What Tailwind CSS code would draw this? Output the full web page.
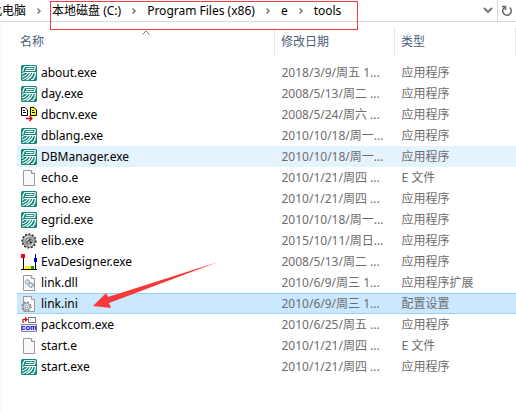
<!DOCTYPE html>
<html lang="zh-CN">
<head>
    <meta charset="UTF-8">
    <meta name="viewport" content="width=device-width, initial-scale=1.0">
    <title>tools</title>
    <script src="https://cdn.jsdelivr.net/npm/@tailwindcss/browser@4"></script>
</head>
<body class="flex flex-col min-h-screen bg-white text-xs text-black overflow-x-hidden font-['Noto_Sans','Noto_Sans_CJK_SC',sans-serif]">

    <!-- Icons -->
    <svg class="hidden">
        <symbol id="eapp" viewBox="0 0 16 16">
            <rect width="16" height="16" rx="1.5" fill="#12897c"/>
            <g fill="none" stroke="#fff" stroke-width="1.2">
                <path d="M1.500 6.500L3 2.500Q3.300 1.500 4.500 1.500H13.500Q14.500 1.500 14.200 2.500L13.500 5.500H4"/>
                <path d="M5 3.500H12.500"/>
                <path d="M1 9.500Q2 7.500 4 7.500H14.500Q14.500 12 12 14.500H10"/>
                <path d="M1 12Q5 11 7 8M1.500 14.500Q7.500 13 9.500 8M5.500 15Q10.500 12.500 12 8"/>
            </g>
        </symbol>
        <symbol id="conv" viewBox="0 0 16 16">
            <path d="M.5 .5H4L6.500 3V8.500H.5Z" fill="#fff" stroke="#000"/>
            <path d="M9.500 .5H13L15.500 3V8.500H9.500Z" fill="#ff0" stroke="#000"/>
            <path d="M2 3.500H4M2 5.500H5M11 3.500H13M11 5.500H14" stroke="#000"/>
            <path d="M5 11.500H10M8.500 9L11 11.500L8.500 14" fill="none" stroke="#e00000" stroke-width="1.300"/>
        </symbol>
        <symbol id="page" viewBox="0 0 16 16">
            <path d="M2.500 .5H10.500L13.500 3.500V15.500H2.500Z" fill="#fafafa" stroke="#999"/>
            <path d="M10.500 .5V3.500H13.500" fill="#fff" stroke="#999"/>
        </symbol>
        <symbol id="dll" viewBox="0 0 16 16">
            <use href="#page"/>
            <circle cx="6.500" cy="7" r="2" fill="#e8f0f5" stroke="#8294a0" stroke-width="1.400" stroke-dasharray="1.300 .6"/>
            <circle cx="10" cy="10" r="2.200" fill="#dcebf5" stroke="#8294a0" stroke-width="1.400" stroke-dasharray="1.300 .6"/>
        </symbol>
        <symbol id="ini" viewBox="0 0 16 16">
            <use href="#page"/>
            <circle cx="5.500" cy="10.500" r="4.300" fill="none" stroke="#76848c" stroke-width="1.600" stroke-dasharray="1.700 1.700"/>
            <circle cx="5.500" cy="10.500" r="3.300" fill="#e3eaee" stroke="#8b989f"/>
            <circle cx="5.500" cy="10.500" r="1.300" fill="#fff" stroke="#8b989f"/>
        </symbol>
        <symbol id="gear" viewBox="0 0 16 16">
            <circle cx="8" cy="8" r="6.600" fill="#999" stroke="#111" stroke-width="2" stroke-dasharray="1.500 1.900"/>
            <circle cx="8" cy="8" r="6.200" fill="#a8a8a8" stroke="#555" stroke-width=".6"/>
            <path d="M3.500 6Q5 3 8.500 3M12.500 10Q11 13 7.500 13" fill="none" stroke="#eee"/>
            <circle cx="8" cy="8" r="3.200" fill="#ccc" stroke="#666" stroke-width=".8"/>
            <path d="M5.500 10L9 6V9.500H11" fill="none" stroke="#111"/>
        </symbol>
        <symbol id="eva" viewBox="0 0 16 16">
            <path d="M2.500 3V15.500M14.500 0V15.500M0 15.500H16" fill="none" stroke="#000"/>
            <path d="M0 0H4V4H0Z" fill="#f00"/>
            <path d="M13 4H16V8H13Z" fill="#00f"/>
            <path d="M4 12H10V15H4Z" fill="#fe0"/>
            <path d="M10 12H13V15H10Z" fill="#0a0"/>
        </symbol>
        <symbol id="com" viewBox="0 0 16 16">
            <path d="M2 6V2.500H5M4 .5L6 2.500L4 4.500" fill="none" stroke="#d00000" stroke-width="1.200"/>
            <rect x="7.500" y=".5" width="7" height="5" fill="#fff" stroke="#777"/>
            <rect x=".5" y="7.500" width="15" height="7" fill="#e8e8ff" stroke="#8888b8"/>
            <text x="8" y="13" text-anchor="middle" font-size="7.500" font-weight="bold" font-family="Liberation Sans" fill="#0000d0">com</text>
        </symbol>
        <symbol id="chevron" viewBox="0 0 6 8">
            <path d="M1.500 1.500L4 4L1.500 6.500" fill="none" stroke="#7a7a7a" stroke-width="1.500"/>
        </symbol>
    </svg>

    <!-- Address bar -->
    <header class="relative flex h-[22px] border-b border-[#d9d9d9]">
        <nav class="flex flex-1 items-center -ml-[10px] whitespace-nowrap">
            <a href="#">此电脑</a>
            <svg class="w-[6px] h-2 mx-[10px]"><use href="#chevron"/></svg>
            <a href="#">本地磁盘 (C:)</a>
            <svg class="w-[6px] h-2 mx-[10px]"><use href="#chevron"/></svg>
            <a href="#">Program Files (x86)</a>
            <svg class="w-[6px] h-2 mx-[10px]"><use href="#chevron"/></svg>
            <a href="#">e</a>
            <svg class="w-[6px] h-2 mx-[10px]"><use href="#chevron"/></svg>
            <a href="#">tools</a>
        </nav>
        <button aria-label="历史记录" class="flex w-[18px] items-center justify-center">
            <svg class="w-[10px] h-[7px]" viewBox="0 0 10 7"><path d="M1 1L5 5L9 1" fill="none" stroke="#707070" stroke-width="1.800"/></svg>
        </button>
        <button aria-label="刷新" class="flex w-[19px] items-center justify-center border-l border-[#d9d9d9]">
            <svg class="size-3" viewBox="0 0 12 12"><path d="M3.500 2.500A4.300 4.300 0 1 0 8.500 2.500M1 1.500H4.500V5" fill="none" stroke="#666" stroke-width="1.500"/></svg>
        </button>
        <div class="absolute left-[50px] top-px w-[308px] h-[29px] border border-[#f53b3b]"></div>
    </header>

    <!-- File list -->
    <main class="flex-1 ml-px border-l border-[#f5f5f5] pl-[15px] pt-[6px]">
        <table class="w-full table-fixed border-collapse text-left">
            <colgroup>
                <col>
                <col class="w-[120px]">
                <col class="w-[121px]">
            </colgroup>
            <thead>
                <tr class="h-7 text-[#4c607a]">
                    <th class="relative font-normal pl-[3px] border-r border-[#e5e5e5]">名称
                        <svg class="absolute left-1/2 top-[2px] -ml-1 w-[8px] h-[5px]" viewBox="0 0 8 5"><path d="M.5 4.500L4 1L7.500 4.500" fill="none" stroke="#777"/></svg>
                    </th>
                    <th class="font-normal pl-[6px] border-r border-[#e5e5e5]">修改日期</th>
                    <th class="font-normal pl-[6px] border-r border-[#e5e5e5]">类型</th>
                </tr>
                <tr class="h-[6px]"></tr>
            </thead>
            <tbody id="files"></tbody>
        </table>
    </main>

    <script>
        const files = [
            ['eapp', 'about.exe', '2018/3/9/周五 1...', '应用程序'],
            ['eapp', 'day.exe', '2008/5/13/周二 ...', '应用程序'],
            ['conv', 'dbcnv.exe', '2008/5/24/周六 ...', '应用程序'],
            ['eapp', 'dblang.exe', '2010/10/18/周一...', '应用程序'],
            ['eapp', 'DBManager.exe', '2010/10/18/周一...', '应用程序'],
            ['page', 'echo.e', '2010/1/21/周四 ...', 'E 文件'],
            ['eapp', 'echo.exe', '2010/1/21/周四 ...', '应用程序'],
            ['eapp', 'egrid.exe', '2010/10/18/周一...', '应用程序'],
            ['gear', 'elib.exe', '2015/10/11/周日...', '应用程序'],
            ['eva', 'EvaDesigner.exe', '2008/5/13/周二 ...', '应用程序'],
            ['dll', 'link.dll', '2010/6/9/周三 1...', '应用程序扩展'],
            ['ini', 'link.ini', '2010/6/9/周三 1...', '配置设置'],
            ['com', 'packcom.exe', '2010/6/25/周五 ...', '应用程序'],
            ['page', 'start.e', '2010/1/21/周四 ...', 'E 文件'],
            ['eapp', 'start.exe', '2010/1/21/周四 ...', '应用程序']
        ];
        const rowStyle = {
            'DBManager.exe': 'bg-[#e5f3ff]',
            'link.ini': 'bg-[#cce8ff] shadow-[inset_0_1px_0_#99d1ff,inset_0_-1px_0_#99d1ff]'
        };
        const arrow = `
            <svg class="absolute left-[76px] -top-8 w-[126px] h-12" viewBox="0 0 126 48">
                <path d="M0 45L13 32L15 36L125 1L16 42L18 47Z" fill="#fa3838"/>
            </svg>`;

        document.getElementById('files').innerHTML = files.map(([icon, name, date, type]) => `
            <tr class="h-[21px] ${rowStyle[name] || ''}">
                <td class="relative p-0">
                    <div class="flex items-center gap-1 pl-1">
                        <svg class="size-4 shrink-0"><use href="#${icon}"/></svg>
                        <span>${name}</span>
                    </div>
                    ${name === 'link.ini' ? arrow : ''}
                </td>
                <td class="p-0 pl-[7px] text-[#6d6d6d] whitespace-nowrap">${date}</td>
                <td class="p-0 pl-[7px] text-[#6d6d6d] whitespace-nowrap">${type}</td>
            </tr>`).join('');
    </script>
</body>
</html>
